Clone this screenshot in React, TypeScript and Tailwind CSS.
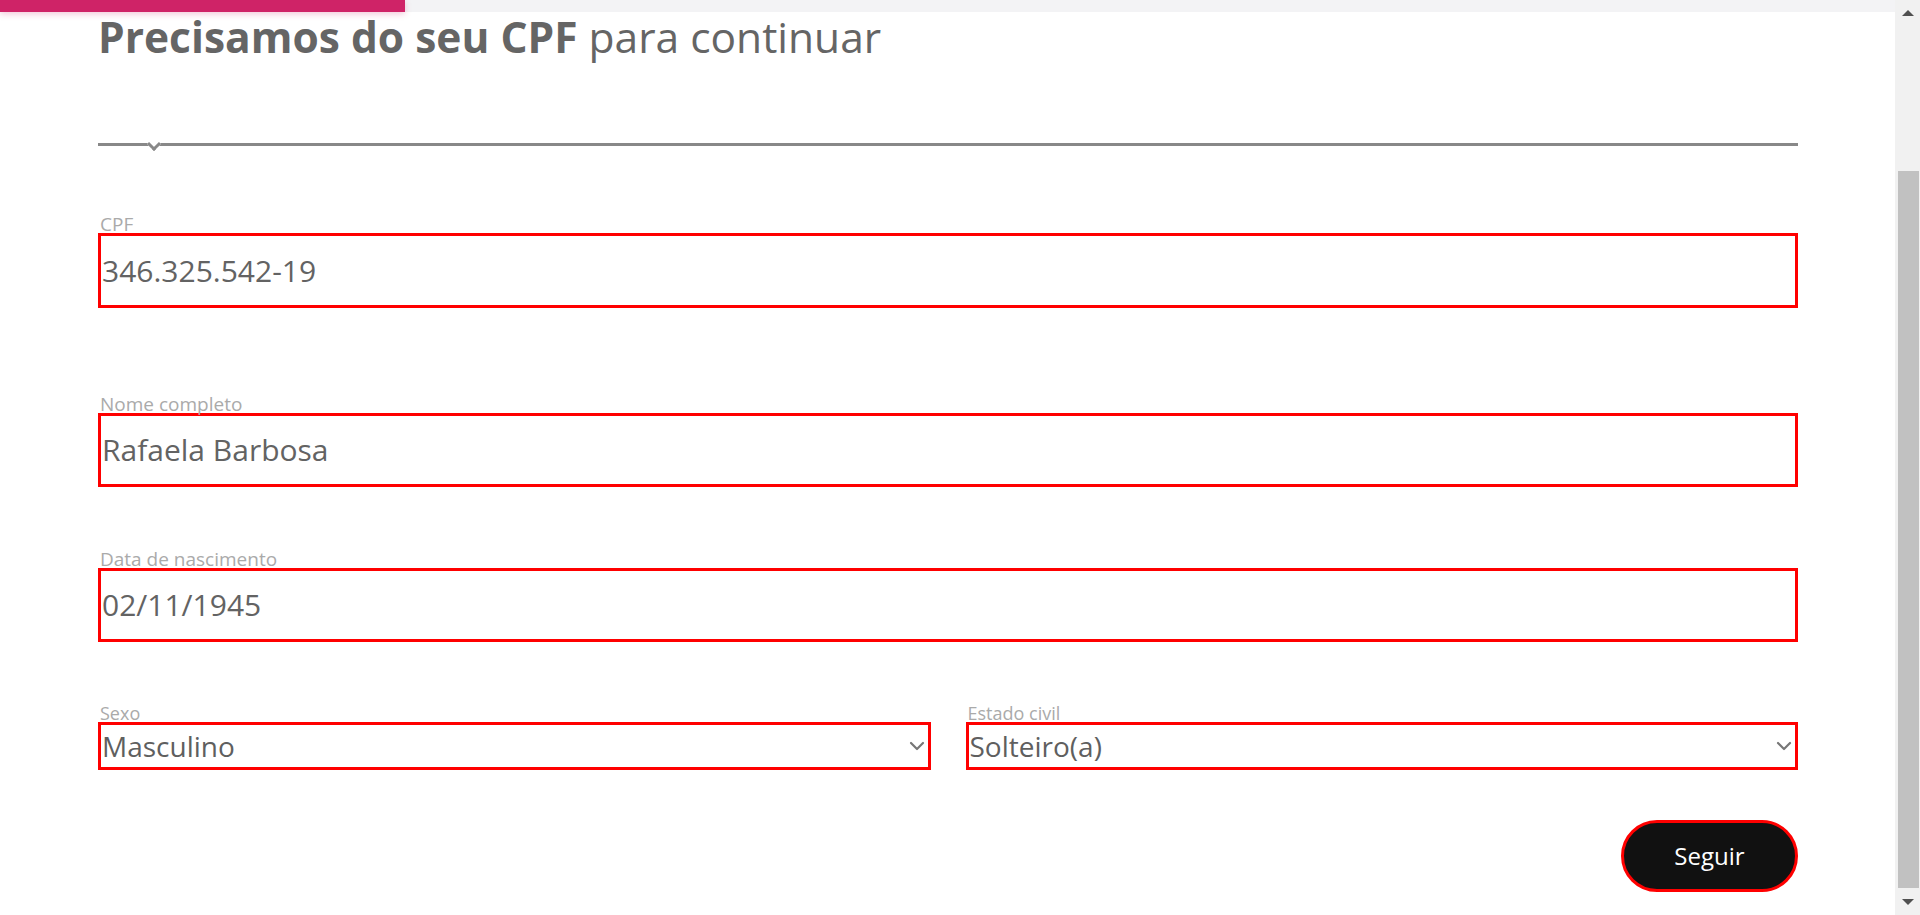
const font = { fontFamily: "'Open Sans', Lato, sans-serif" };

function Chevron() {
  return (
    <svg width="16" height="10" viewBox="0 0 16 10" fill="none" className="shrink-0">
      <polyline points="2,2 8,8 14,2" stroke="#777777" strokeWidth="2.2" strokeLinecap="round" strokeLinejoin="round" />
    </svg>
  );
}

function TextField({ label, value, top, height }: { label: string; value: string; top: string; height: string }) {
  return (
    <div className={top}>
      <label className="block pl-[2px] text-[19px] leading-[17px] text-[#aaaaaa]">{label}</label>
      <div className={`flex items-center border-[3px] border-[#ff0000] px-[1px] ${height}`}>
        <span className="text-[30px] leading-none text-[#636363]">{value}</span>
      </div>
    </div>
  );
}

function SelectField({ label, value }: { label: string; value: string }) {
  return (
    <div className="flex-1">
      <label className="block pl-[2px] text-[18px] leading-[17px] text-[#aaaaaa]">{label}</label>
      <div className="flex h-[48px] items-center justify-between border-[3px] border-[#ff0000] pl-[1px] pr-[3px]">
        <span className="text-[28px] leading-none text-[#5f5f5f]">{value}</span>
        <Chevron />
      </div>
    </div>
  );
}

export default function App() {
  return (
    <div className="flex h-[915px] overflow-hidden bg-white" style={font}>
      <main className="flex-1">
        <div className="h-[12px] bg-[#f3f3f5]">
          <div className="h-[12px] w-[405px] bg-[#cf2367] shadow-[0_2px_6px_rgba(207,35,103,0.25)]" />
        </div>

        <div className="pl-[98px] pr-[97px]">
          <h1 className="mt-[1px] text-[42.5px] leading-[48px] text-[#656565]">
            <span className="font-bold">Precisamos do seu CPF</span> para continuar
          </h1>

          <div className="relative mt-[82px] h-[3px] bg-[#888888]">
            <div className="absolute left-[51px] top-[-4px] h-[10px] w-[10px] rotate-45 border-b-[3px] border-r-[3px] border-[#888888] bg-white" />
          </div>

          <TextField label="CPF" value="346.325.542-19" top="mt-[70px]" height="h-[75px]" />
          <TextField label="Nome completo" value="Rafaela Barbosa" top="mt-[88px]" height="h-[74px]" />
          <TextField label="Data de nascimento" value="02/11/1945" top="mt-[64px]" height="h-[74px]" />

          <div className="mt-[63px] flex gap-[35px]">
            <SelectField label="Sexo" value="Masculino" />
            <SelectField label="Estado civil" value="Solteiro(a)" />
          </div>

          <div className="mt-[50px] flex justify-end">
            <button className="h-[72px] w-[177px] rounded-full border-[3px] border-[#ff0000] bg-[#111111] text-[24px] text-white">
              Seguir
            </button>
          </div>
        </div>
      </main>

      <aside className="flex w-[25px] flex-col items-center bg-[#f1f1f1]">
        <div className="mt-[10px] h-0 w-0 border-x-[6px] border-b-[6px] border-x-transparent border-b-[#505050]" />
        <div className="ml-[2px] mt-[155px] h-[717px] w-[21px] bg-[#c1c1c1]" />
        <div className="mt-[11px] h-0 w-0 border-x-[6px] border-t-[6px] border-x-transparent border-t-[#505050]" />
      </aside>
    </div>
  );
}
